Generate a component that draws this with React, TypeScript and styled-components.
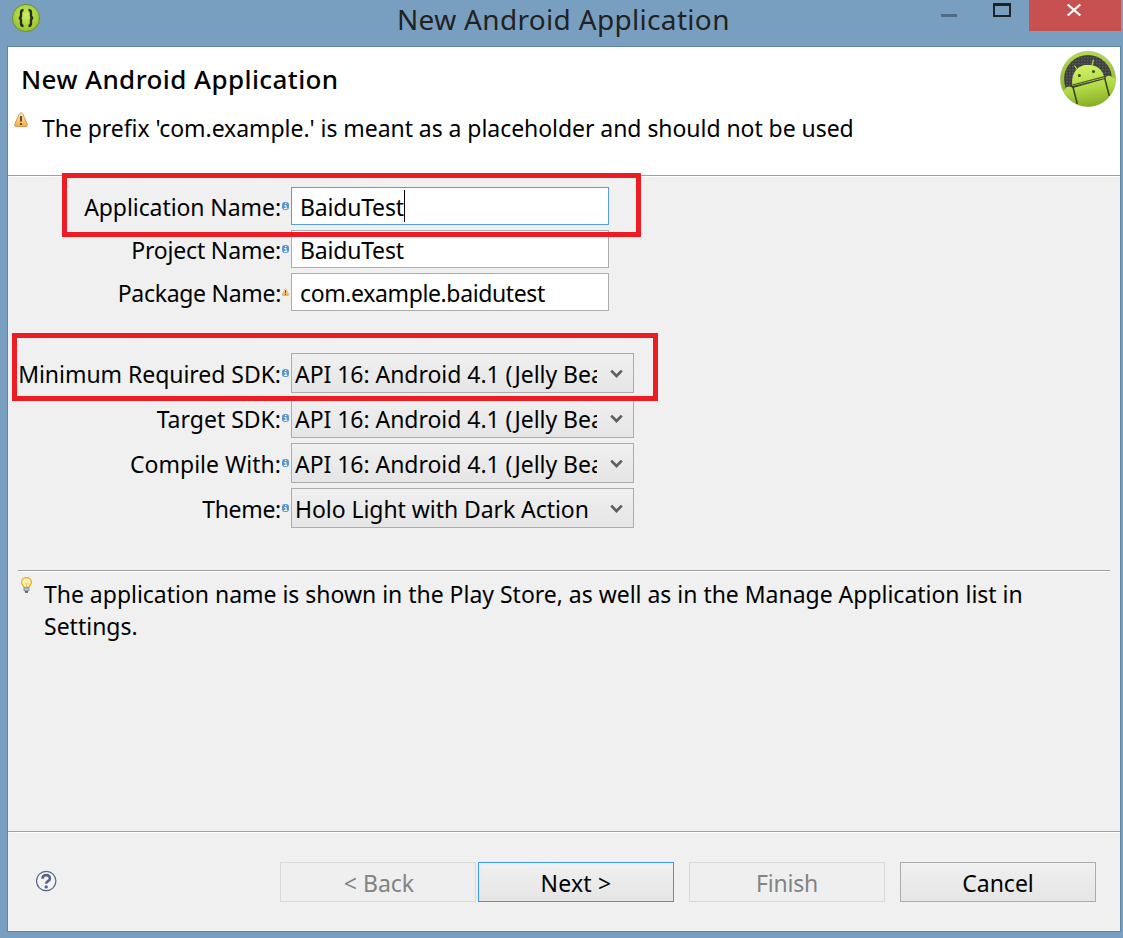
import React from "react";
import styled, { createGlobalStyle } from "styled-components";

const Global = createGlobalStyle`
  * { box-sizing: border-box; }
  body { margin: 0; background: #789fbf; overflow: hidden; }
`;

const Window = styled.div`
  width: 1123px;
  height: 938px;
  display: flex;
  flex-direction: column;
  background: #789fbf;
  color: #000;
  font-family: "Noto Sans", "Open Sans", sans-serif;
  font-size: 23px;
  line-height: 32px;
  padding: 0 2px 6px 7px;
`;

const TitleBar = styled.header`
  flex: 0 0 46px;
  display: grid;
  grid-template-columns: 300px 1fr 200px;
  align-items: start;
`;

const AppIcon = styled.svg`
  display: block;
  margin: 3px 0 0 4px;
`;

const Caption = styled.div`
  padding: 0 0 0 90px;
  font-size: 28px;
  line-height: 38px;
  letter-spacing: 0.32px;
  color: #222;
  white-space: nowrap;
`;

const Controls = styled.div`
  display: flex;
  justify-content: flex-end;
`;

const ControlButton = styled.div<{ $close?: boolean }>`
  width: ${(p) => (p.$close ? 92 : 54)}px;
  height: 31px;
  background: ${(p) => (p.$close ? "#c75050" : "transparent")};
  svg { display: block; }
`;

const Client = styled.main`
  flex: 1;
  display: flex;
  flex-direction: column;
  border: 1px solid #5f87a6;
  background: #f0f0f0;
`;

const Banner = styled.section`
  flex: 0 0 130px;
  display: flex;
  justify-content: space-between;
  background: #fff;
  border-bottom: 1px solid #fff;
  box-shadow: inset 0 -1px #a0a0a0;
  padding: 4px 4px 0 13px;
`;

const Heading = styled.h1`
  margin: 0;
  padding-top: 8px;
  font-size: 26px;
  font-weight: 500;
  line-height: 40px;
  letter-spacing: 0.41px;
`;

const Message = styled.div`
  display: flex;
  align-items: flex-start;
  margin-left: -7px;
  padding-top: 13px;
  gap: 14px;
`;

const Line = styled.span<{ $spacing?: number }>`
  display: block;
  white-space: nowrap;
  letter-spacing: ${(p) => p.$spacing ?? 0}px;
`;

const Form = styled.section`
  position: relative;
  display: flex;
  flex-direction: column;
  gap: 5px;
  padding-top: 10px;
`;

const Row = styled.div<{ $height: number; $gapBefore?: number }>`
  display: grid;
  grid-template-columns: 274px 7px auto;
  align-items: center;
  height: ${(p) => p.$height}px;
  margin-top: ${(p) => p.$gapBefore ?? 0}px;
`;

const Label = styled.label<{ $spacing: number }>`
  justify-self: end;
  white-space: nowrap;
  padding: 2px 1px 0 0;
  letter-spacing: ${(p) => p.$spacing}px;
`;

const Field = styled.div<{ $focused?: boolean }>`
  display: flex;
  align-items: center;
  width: 318px;
  height: 38px;
  margin-left: 2px;
  padding: 2px 0 0 8px;
  border: 1px solid ${(p) => (p.$focused ? "#569de5" : "#abadb3")};
  background: #fff;
`;

const Caret = styled.span`
  width: 1px;
  height: 32px;
  margin-top: -2px;
  background: #000;
`;

const Combo = styled.div`
  display: flex;
  justify-content: space-between;
  align-items: center;
  width: 343px;
  height: 40px;
  margin-left: 2px;
  padding: 0 10px 0 3px;
  border: 1px solid #acacac;
  background: linear-gradient(#f0f0f0, #e5e5e5);
`;

const ComboText = styled.div`
  width: 302px;
  padding-top: 2px;
  overflow: hidden;
`;

const Arrow = styled.svg`
  display: block;
  margin-top: 2px;
`;

const Mark = styled.div<{ $x: number; $y: number; $w: number; $h: number }>`
  position: absolute;
  left: ${(p) => p.$x}px;
  top: ${(p) => p.$y}px;
  width: ${(p) => p.$w}px;
  height: ${(p) => p.$h}px;
  border: 5px solid #ed1c24;
`;

const Tip = styled.section`
  display: flex;
  gap: 12px;
  margin: 42px 10px 0;
  padding: 6px 0 0 3px;
  border-top: 1px solid #a0a0a0;
  box-shadow: inset 0 1px #fff;
`;

const TipText = styled.div`
  padding-top: 1px;
`;

const Footer = styled.footer`
  display: flex;
  align-items: flex-start;
  height: 100px;
  margin-top: auto;
  padding: 30px 24px 0 28px;
  border-top: 1px solid #a0a0a0;
  box-shadow: inset 0 1px #fff;
`;

const Buttons = styled.div`
  display: flex;
  margin-left: auto;
`;

const Button = styled.button<{ $kind?: "primary" | "off"; $left?: number; $spacing?: number; $indent?: number }>`
  width: 196px;
  height: 40px;
  margin: 0 0 0 ${(p) => p.$left ?? 15}px;
  padding: 2px 0 0 ${(p) => p.$indent ?? 0}px;
  font: inherit;
  line-height: 34px;
  letter-spacing: ${(p) => p.$spacing ?? 0}px;
  color: ${(p) => (p.$kind === "off" ? "#838383" : "#000")};
  border: 1px solid ${(p) => (p.$kind === "off" ? "#d9d9d9" : p.$kind === "primary" ? "#3399ff" : "#acacac")};
  background: ${(p) => (p.$kind === "off" ? "#efefef" : "linear-gradient(#f0f0f0, #e5e5e5)")};
`;

const HelpIcon = styled.svg`
  display: block;
  margin-top: 8px;
`;

const HintIcon = styled.svg`
  display: block;
`;

const InfoMark = () => (
  <HintIcon width="7" height="8" viewBox="0 0 7 8">
    <rect x="0" y="0" width="7" height="8" rx="3" fill="#5b97c6" />
    <path d="M3 1.500h1.400M2.400 3.500h1.600v2.500M2 6.500h3.200" stroke="#fff" strokeWidth="1" fill="none" />
  </HintIcon>
);

const Warning = ({ w, h }: { w: number; h: number }) => (
  <HintIcon width={w} height={h} viewBox="0 0 14 15">
    <defs>
      <linearGradient id="warn" x1="0" y1="0" x2="0" y2="1">
        <stop offset="0" stopColor="#fff0c4" />
        <stop offset="1" stopColor="#f5ac3c" />
      </linearGradient>
    </defs>
    <path d="M5.500 1.500Q7-.2 8.500 1.500L13.400 12.500Q13.600 14.400 12 14.500H2Q.4 14.400.6 12.500Z" fill="url(#warn)" stroke="#d09a5c" />
    <path d="M7 4v5.600M7 11v2" stroke="#5c3a10" strokeWidth="1.800" />
  </HintIcon>
);

const Bulb = () => (
  <svg width="11" height="16" viewBox="0 0 11 16">
    <path d="M5.500.6C2.600.6.600 2.600.600 5.200c0 2 1.600 3 2.400 5.200h5C8.800 8.200 10.400 7.200 10.400 5.200 10.400 2.600 8.400.600 5.500.600Z" fill="#fff3b0" stroke="#f0a31f" strokeWidth="1.200" />
    <path d="M4 6l1.500 1 1.500-1M5.500 7v3" stroke="#f0b848" fill="none" strokeWidth=".8" />
    <path d="M3 10.800h5v3H3z" fill="#b9c5d4" stroke="#71839b" strokeWidth=".8" />
    <path d="M4 15h3" stroke="#3c4f6b" strokeWidth="1.600" />
  </svg>
);

const Chevron = () => (
  <Arrow width="13" height="10" viewBox="0 0 13 10">
    <path d="M1.200 1.600L6.500 7 11.800 1.600" fill="none" stroke="#606060" strokeWidth="2.700" />
  </Arrow>
);

const AndroidLogo = () => (
  <svg width="56" height="56" viewBox="0 0 56 56">
    <defs>
      <linearGradient id="rim" x1="0" y1="0" x2="0" y2="1">
        <stop offset="0" stopColor="#b6d94e" />
        <stop offset="1" stopColor="#7fa520" />
      </linearGradient>
      <linearGradient id="body" gradientUnits="userSpaceOnUse" x1="25" y1="14" x2="32" y2="56">
        <stop offset="0" stopColor="#d0f364" />
        <stop offset=".55" stopColor="#b0d844" />
        <stop offset="1" stopColor="#86ab24" />
      </linearGradient>
      <pattern id="mesh" width="3" height="3" patternUnits="userSpaceOnUse">
        <rect width="3" height="3" fill="#404040" />
        <rect width="1.500" height="1.500" fill="#5c5c5c" />
      </pattern>
      <clipPath id="disc"><circle cx="28" cy="28" r="27.500" /></clipPath>
    </defs>
    <circle cx="28" cy="28" r="27.600" fill="url(#rim)" stroke="#a3b67a" strokeWidth=".6" />
    <circle cx="28" cy="28" r="24" fill="url(#mesh)" />
    <g clipPath="url(#disc)">
      <path d="M2 40L5.200 38Q7.500 34.500 11 36L13 37 45 28 46 26Q49 23.500 52 26L55 28V56H4Z" fill="url(#body)" />
      <path d="M12.500 35C10.500 22 18 14 27 14 37 13 43 19 44.500 27Z" fill="url(#body)" />
      <path d="M17.300 18.500l-3-4M32 14.700l1.400-6" stroke="#b5da4c" strokeWidth="1.200" />
      <path d="M12.500 34L44.500 25.700" stroke="#4b5b18" strokeWidth="1.200" />
      <path d="M12.700 35l4.600 18M44.700 27l4.600 18" stroke="#35400f" strokeWidth="1.500" />
      <circle cx="19.300" cy="24.500" r="1.500" fill="#3c4a16" />
      <circle cx="33.500" cy="20.500" r="1.500" fill="#3c4a16" />
    </g>
  </svg>
);

const SDK = "API 16: Android 4.1 (Jelly Bean)";

const SdkCombo = () => (
  <Combo><ComboText><Line $spacing={-0.04}>{SDK}</Line></ComboText><Chevron /></Combo>
);

export default function App() {
  return (
    <Window>
      <Global />
      <TitleBar>
        <AppIcon width="30" height="30" viewBox="0 0 30 30">
          <defs>
            <radialGradient id="lime" cx=".5" cy=".4" r=".62">
              <stop offset="0" stopColor="#cdf060" />
              <stop offset="1" stopColor="#94bf22" />
            </radialGradient>
          </defs>
          <circle cx="15" cy="15" r="13.600" fill="url(#lime)" stroke="#6d8f3c" />
          <path d="M12.500 7Q10 7 10 10V12.500Q10 15 7.800 15 10 15 10 17.500V20Q10 23 12.500 23M17.500 7Q20 7 20 10V12.500Q20 15 22.200 15 20 15 20 17.500V20Q20 23 17.500 23" fill="none" stroke="#262a26" strokeWidth="2.400" />
        </AppIcon>
        <Caption>New Android Application</Caption>
        <Controls>
          <ControlButton>
            <svg width="54" height="31"><path d="M20 15.500h16" stroke="#556b7d" strokeWidth="3" /></svg>
          </ControlButton>
          <ControlButton>
            <svg width="54" height="31"><path d="M18 4.500h18M19 4v12h16V4" stroke="#222" strokeWidth="2" fill="none" /><path d="M18 3h18v3H18z" fill="#222" /></svg>
          </ControlButton>
          <ControlButton $close>
            <svg width="92" height="31"><path d="M38.700 4.500l12.600 11M51.300 4.500l-12.600 11" stroke="#fff" strokeWidth="2.300" /></svg>
          </ControlButton>
        </Controls>
      </TitleBar>
      <Client>
        <Banner>
          <div>
            <Heading>New Android Application</Heading>
            <Message>
              <Warning w={14} h={15} />
              <Line $spacing={-0.055}>The prefix 'com.example.' is meant as a placeholder and should not be used</Line>
            </Message>
          </div>
          <AndroidLogo />
        </Banner>
        <Form>
          <Row $height={38}>
            <Label $spacing={-0.08}>Application Name:</Label>
            <InfoMark />
            <Field $focused><Line $spacing={-0.2}>BaiduTest</Line><Caret /></Field>
          </Row>
          <Row $height={38}>
            <Label $spacing={-0.18}>Project Name:</Label>
            <InfoMark />
            <Field><Line $spacing={-0.2}>BaiduTest</Line></Field>
          </Row>
          <Row $height={38}>
            <Label $spacing={-0.3}>Package Name:</Label>
            <Warning w={7} h={8} />
            <Field><Line $spacing={-0.38}>com.example.baidutest</Line></Field>
          </Row>
          <Row $height={40} $gapBefore={37}>
            <Label $spacing={-0.04}>Minimum Required SDK:</Label>
            <InfoMark />
            <SdkCombo />
          </Row>
          <Row $height={40}>
            <Label $spacing={0}>Target SDK:</Label>
            <InfoMark />
            <SdkCombo />
          </Row>
          <Row $height={40}>
            <Label $spacing={0}>Compile With:</Label>
            <InfoMark />
            <SdkCombo />
          </Row>
          <Row $height={40}>
            <Label $spacing={-0.3}>Theme:</Label>
            <InfoMark />
            <Combo><ComboText><Line $spacing={-0.06}>Holo Light with Dark Action</Line></ComboText><Chevron /></Combo>
          </Row>
          <Mark $x={54} $y={-4} $w={579} $h={64} />
          <Mark $x={4} $y={156} $w={646} $h={68} />
        </Form>
        <Tip>
          <Bulb />
          <TipText>
            <Line $spacing={-0.02}>The application name is shown in the Play Store, as well as in the Manage Application list in</Line>
            <Line>Settings.</Line>
          </TipText>
        </Tip>
        <Footer>
          <HelpIcon width="21" height="22" viewBox="0 0 21 22">
            <circle cx="10.200" cy="11" r="9.700" fill="#f4f4f4" stroke="#52678a" strokeWidth="1.200" />
            <path d="M6.500 8.700Q6.500 5.100 10.200 5.100T13.900 8.400Q13.900 10.100 12 11.100 10.200 12 10.200 13.700" fill="none" stroke="#52678a" strokeWidth="2.600" />
            <circle cx="10.200" cy="16.900" r="1.700" fill="#52678a" />
          </HelpIcon>
          <Buttons>
            <Button disabled $kind="off" $left={0} $indent={2}>&lt; Back</Button>
            <Button $kind="primary" $left={2} $spacing={0.2}>Next &gt;</Button>
            <Button disabled $kind="off" $spacing={-0.2}>Finish</Button>
            <Button>Cancel</Button>
          </Buttons>
        </Footer>
      </Client>
    </Window>
  );
}
